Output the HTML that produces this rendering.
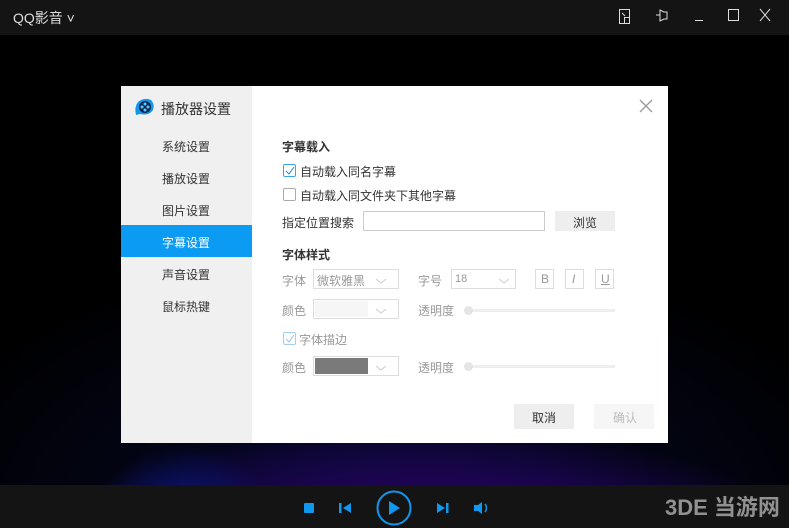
<!DOCTYPE html><html><head><meta charset="utf-8"><style>
*{margin:0;padding:0;box-sizing:border-box}
body{width:789px;height:528px;overflow:hidden;background:#000;font-family:"Liberation Sans","Noto Sans CJK SC",sans-serif;position:relative;color:#333}
.a{position:absolute}
.top{left:0;top:0;width:789px;height:35px;background:#141414}
.bot{left:0;top:485px;width:789px;height:43px;background:#141414}
.glow{left:0;top:36px;width:789px;height:449px;background:radial-gradient(ellipse 90px 70px at 185px 480px,#0a1c8a 0%,rgba(8,20,110,.6) 50%,rgba(0,0,0,0) 100%),radial-gradient(ellipse 360px 90px at 430px 485px,#2a0660 0%,#1c0450 45%,rgba(0,0,0,0) 100%),radial-gradient(ellipse 500px 260px at 390px 470px,#0a0a40 0%,rgba(5,8,35,.6) 50%,#000 100%)}
.dlg{left:121px;top:86px;width:547px;height:357px;background:#fff}
.side{left:121px;top:86px;width:131px;height:357px;background:#f0f0f0}
.t{font-size:12px;white-space:nowrap}
.g{color:#999}
.box{border:1px solid #ddd;background:#fff}
.cb{width:13px;height:13px;border:1px solid #aaa;border-radius:2px;background:#fff}
</style></head><body>
<div class="a glow"></div>
<div class="a top"></div>
<div class="a t" style="left:13px;top:8px;color:#ddd;font-size:14px">QQ影音 ˅</div>
<svg class="a" style="left:610px;top:5px" width="170" height="24" fill="none" stroke="#ddd" stroke-width="1">
<rect x="9.5" y="4.5" width="10" height="14"/><rect x="14.5" y="12.5" width="5" height="6"/><path d="M12 8l3 3"/>
<path d="M46 10h4M50 5v11l4-2h3v-7h-3z"/>
<path d="M85 15.5h8"/><rect x="118.5" y="4.5" width="10" height="11"/><path d="M150 4l10 12M160 4l-10 12"/></svg>
<div class="a dlg"></div>
<div class="a side"></div>
<svg class="a" style="left:134px;top:97px" width="22" height="20"><path d="M2 18 Q0 10 4 5 Q10 0 17 3 Q21 7 19 13 Q15 19 6 17z" fill="#1596e8"/><circle cx="11" cy="10" r="6" fill="#0a2a55"/><g fill="#5cc8ff"><circle cx="11" cy="7" r="1.5"/><circle cx="8" cy="10" r="1.5"/><circle cx="14" cy="10" r="1.5"/><circle cx="11" cy="13" r="1.5"/></g></svg>
<div class="a t" style="left:161px;top:99px;font-size:14px;color:#333">播放器设置</div>
<div class="a t" style="left:162px;top:138px">系统设置</div>
<div class="a t" style="left:162px;top:170px">播放设置</div>
<div class="a t" style="left:162px;top:202px">图片设置</div>
<div class="a" style="left:121px;top:225px;width:131px;height:32px;background:#0b9bf3"></div>
<div class="a t" style="left:162px;top:234px;color:#fff">字幕设置</div>
<div class="a t" style="left:162px;top:266px">声音设置</div>
<div class="a t" style="left:162px;top:298px">鼠标热键</div>
<svg class="a" style="left:638px;top:98px" width="16" height="16" stroke="#999" stroke-width="1.3"><path d="M2 2l12 12M14 2L2 14"/></svg>
<div class="a t" style="left:282px;top:138px;font-weight:bold">字幕载入</div>
<div class="a cb" style="left:283px;top:164px;border-color:#3aa3ea"></div>
<svg class="a" style="left:285px;top:166px" width="10" height="10"><path d="M1 5l3 3 5-7" fill="none" stroke="#1a8fe0" stroke-width="1"/></svg>
<div class="a t" style="left:300px;top:163px">自动载入同名字幕</div>
<div class="a cb" style="left:283px;top:188px"></div>
<div class="a t" style="left:300px;top:187px">自动载入同文件夹下其他字幕</div>
<div class="a t" style="left:282px;top:214px">指定位置搜索</div>
<div class="a box" style="left:363px;top:211px;width:182px;height:20px;border-color:#ccc"></div>
<div class="a" style="left:555px;top:211px;width:60px;height:20px;background:#eee"></div>
<div class="a t" style="left:573px;top:214px">浏览</div>
<div class="a t" style="left:282px;top:246px;font-weight:bold">字体样式</div>
<div class="a t g" style="left:282px;top:272px">字体</div>
<div class="a box" style="left:313px;top:269px;width:86px;height:20px"></div>
<div class="a t g" style="left:317px;top:272px">微软雅黑</div>
<div class="a t g" style="left:418px;top:272px">字号</div>
<div class="a box" style="left:451px;top:269px;width:65px;height:20px"></div>
<div class="a t g" style="left:455px;top:273px;font-size:11px">18</div>
<div class="a box" style="left:535px;top:269px;width:19px;height:20px"></div><div class="a t g" style="left:541px;top:272px">B</div>
<div class="a box" style="left:565px;top:269px;width:19px;height:20px"></div><div class="a t g" style="left:572px;top:272px;font-style:italic">I</div>
<div class="a box" style="left:595px;top:269px;width:19px;height:20px"></div><div class="a t g" style="left:601px;top:272px;text-decoration:underline">U</div>
<div class="a t g" style="left:282px;top:302px">颜色</div>
<div class="a box" style="left:313px;top:299px;width:86px;height:20px"></div>
<div class="a" style="left:315px;top:301px;width:53px;height:16px;background:#f6f6f6"></div>
<div class="a t g" style="left:418px;top:302px">透明度</div>
<div class="a" style="left:468px;top:309px;width:147px;height:3px;background:#eee"></div>
<div class="a" style="left:464px;top:306px;width:9px;height:9px;border-radius:50%;background:#e4e4e4"></div>
<div class="a cb" style="left:283px;top:332px;border-color:#9fd0f3"></div>
<svg class="a" style="left:285px;top:334px" width="10" height="10"><path d="M1 5l3 3 5-7" fill="none" stroke="#8cc6ee" stroke-width="1"/></svg>
<div class="a t g" style="left:299px;top:331px">字体描边</div>
<div class="a t g" style="left:282px;top:359px">颜色</div>
<div class="a box" style="left:313px;top:356px;width:86px;height:20px"></div>
<div class="a" style="left:315px;top:358px;width:53px;height:16px;background:#7a7a7a"></div>
<div class="a t g" style="left:418px;top:359px">透明度</div>
<div class="a" style="left:468px;top:365px;width:147px;height:3px;background:#eee"></div>
<div class="a" style="left:464px;top:362px;width:9px;height:9px;border-radius:50%;background:#e4e4e4"></div>
<svg class="a" style="left:370px;top:273px" width="30" height="100" fill="none" stroke="#ccc"><path d="M6 6l5 4 5-4M6 36l5 4 5-4M6 93l5 4 5-4"/></svg>
<svg class="a" style="left:495px;top:273px" width="20" height="12" fill="none" stroke="#ccc"><path d="M4 6l5 4 5-4"/></svg>
<div class="a" style="left:514px;top:404px;width:60px;height:25px;background:#eee"></div>
<div class="a t" style="left:532px;top:409px">取消</div>
<div class="a" style="left:594px;top:404px;width:60px;height:25px;background:#f6f6f6"></div>
<div class="a t" style="left:613px;top:409px;color:#bbb">确认</div>
<div class="a bot"></div>
<svg class="a" style="left:290px;top:488px" width="210" height="40" fill="#1098f0">
<rect x="14" y="15" width="10" height="10" rx="1"/>
<rect x="49" y="15" width="2.5" height="10"/><path d="M61 15v10l-8-5z"/>
<circle cx="104" cy="20" r="16.5" fill="none" stroke="#1098f0" stroke-width="2"/><path d="M99 13v14l11-7z"/>
<path d="M147 15v10l8-5z"/><rect x="156" y="15" width="2.5" height="10"/>
<path d="M184 17h4l4-3v12l-4-3h-4z"/><path d="M195 16q3 4 0 8" fill="none" stroke="#1098f0" stroke-width="1.5"/></svg>
<div class="a t" style="left:665px;top:490px;color:#bbb;font-size:22px;font-weight:bold;opacity:.75">3DE 当游网</div>
</body></html>
